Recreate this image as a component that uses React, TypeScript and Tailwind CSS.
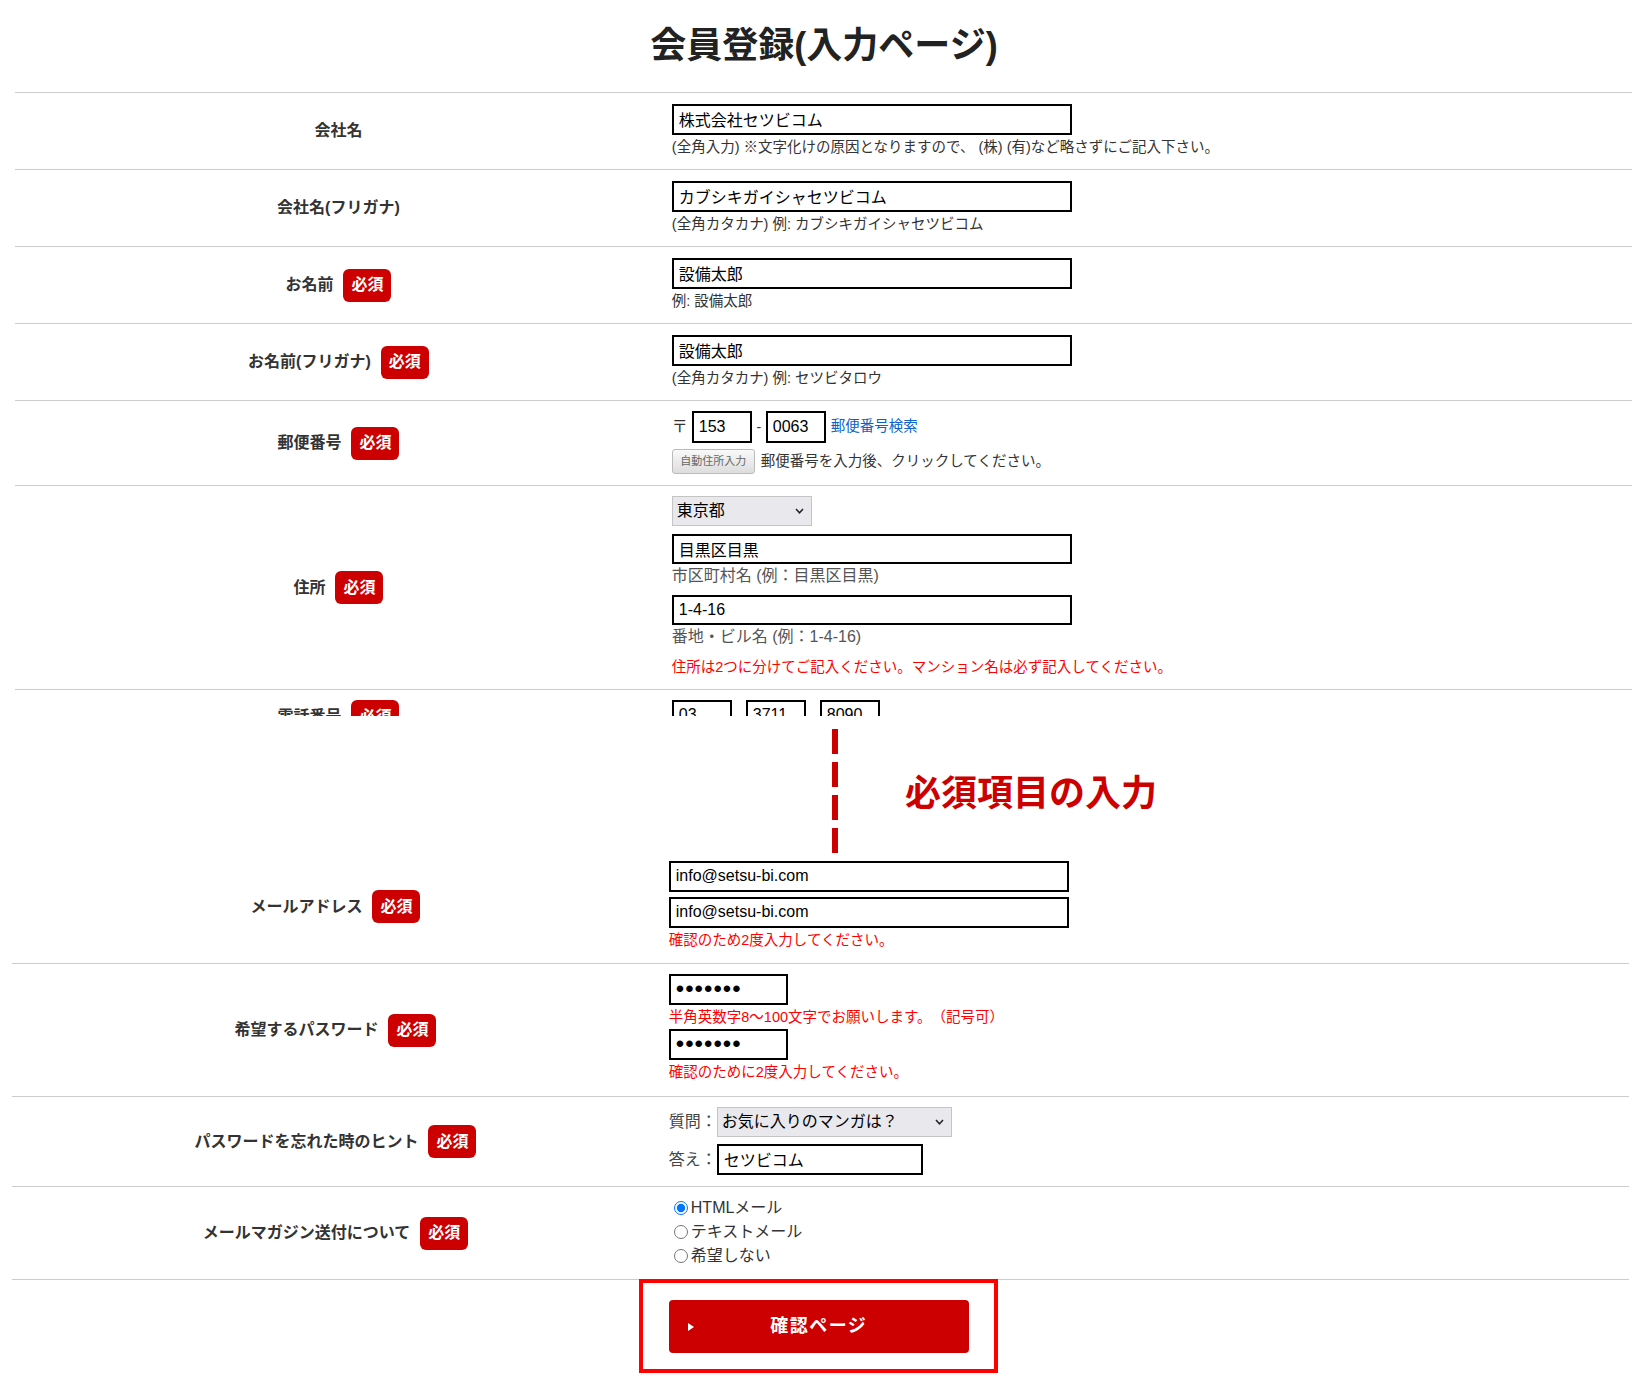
import type { ReactNode } from "react";

const basicRows = [
  {
    label: "会社名",
    required: false,
    value: "株式会社セツビコム",
    note: "(全角入力) ※文字化けの原因となりますので、 (株) (有)など略さずにご記入下さい。",
  },
  {
    label: "会社名(フリガナ)",
    required: false,
    value: "カブシキガイシャセツビコム",
    note: "(全角カタカナ) 例: カブシキガイシャセツビコム",
  },
  { label: "お名前", required: true, value: "設備太郎", note: "例: 設備太郎" },
  {
    label: "お名前(フリガナ)",
    required: true,
    value: "設備太郎",
    note: "(全角カタカナ) 例: セツビタロウ",
  },
];

const magazineOptions = ["HTMLメール", "テキストメール", "希望しない"];

const Required = () => (
  <span className="inline-flex h-[33px] w-[48px] items-center justify-center rounded-[6px] bg-[#cc0000] text-[16px] font-bold leading-none text-white">
    必須
  </span>
);

type RowProps = {
  label?: string;
  required?: boolean;
  noBorder?: boolean;
  bodyClassName?: string;
  children?: ReactNode;
};

const Row = ({ label, required, noBorder, bodyClassName, children }: RowProps) => (
  <div className={noBorder ? "flex" : "flex border-t border-[#cccccc]"}>
    <div className="flex w-[40%] items-center justify-center gap-[10px]">
      {label && <span className="text-[16px] font-bold text-[#333333]">{label}</span>}
      {required && <Required />}
    </div>
    <div className={`w-[60%] pl-[10px] ${bodyClassName ?? ""}`}>{children}</div>
  </div>
);

const TextBox = ({
  value,
  type = "text",
  className = "",
}: {
  value: string;
  type?: string;
  className?: string;
}) => (
  <input
    type={type}
    defaultValue={value}
    readOnly
    className={`block border-2 border-black bg-white px-[5px] pb-[1px] text-black outline-none ${className}`}
  />
);

// looks like the browser's grey select box
const FakeSelect = ({ value, className = "" }: { value: string; className?: string }) => (
  <div
    className={`flex items-center justify-between border border-[#c4c4c4] bg-[#e9e9ed] pl-[4px] pr-[7px] text-[16px] text-black ${className}`}
  >
    <span>{value}</span>
    <svg width="9" height="6" viewBox="0 0 9 6" fill="none">
      <polyline points="1,1 4.5,4.8 8,1" stroke="#222" strokeWidth="1.5" />
    </svg>
  </div>
);

const App = () => {
  return (
    <div className="min-h-[1400px] bg-white font-['Liberation_Sans','Noto_Sans_CJK_JP',sans-serif] text-[#333333] [text-spacing-trim:space-all]">
      <h1 className="flex h-[92px] items-center justify-center text-[36px] font-bold leading-[44px] text-[#222222]">
        会員登録(入力ページ)
      </h1>

      {/* upper part of the form */}
      <div className="ml-[15px] w-[1617px]">
        {basicRows.map((row) => (
          <Row key={row.label} label={row.label} required={row.required} bodyClassName="pt-[11px] pb-[10px]">
            <TextBox value={row.value} className="h-[31px] w-[400px] text-[16px]" />
            <p className="text-[14.5px] leading-[24px] text-[#333333]">{row.note}</p>
          </Row>
        ))}

        <Row label="郵便番号" required bodyClassName="pt-[10px] pb-[11px]">
          <div className="flex h-[32px] items-center">
            <span className="w-[20px] text-[16px] text-[#333333]">〒</span>
            <TextBox value="153" className="h-[32px] w-[60px] text-[16px]" />
            <span className="w-[14px] text-center text-[14px]">-</span>
            <TextBox value="0063" className="h-[32px] w-[60px] text-[16px]" />
            <a className="ml-[5px] cursor-pointer text-[14.5px] text-[#0a63c9]">郵便番号検索</a>
          </div>
          <div className="mt-[6px] flex items-center">
            <button className="h-[25px] w-[83px] rounded-[3px] border border-[#bbbbbb] bg-linear-to-b from-[#f9f9f9] to-[#dddddd] text-[11px] text-[#666666]">
              自動住所入力
            </button>
            <span className="ml-[6px] text-[14.5px] text-[#333333]">郵便番号を入力後、クリックしてください。</span>
          </div>
        </Row>

        <Row label="住所" required bodyClassName="pt-[10px] pb-[12px]">
          <FakeSelect value="東京都" className="h-[30px] w-[140px]" />
          <TextBox value="目黒区目黒" className="mt-[8px] h-[30px] w-[400px] text-[16px]" />
          <p className="text-[16px] leading-[24px] text-[#555555]">市区町村名 (例：目黒区目黒)</p>
          <TextBox value="1-4-16" className="mt-[7px] h-[30px] w-[400px] text-[16px]" />
          <p className="text-[16px] leading-[24px] text-[#555555]">番地・ビル名 (例：1-4-16)</p>
          <p className="mt-[8px] text-[14.5px] leading-[20px] text-[#ff0000]">
            住所は2つに分けてご記入ください。マンション名は必ず記入してください。
          </p>
        </Row>

        {/* phone row is cut off in the capture */}
        <div className="h-[27px] overflow-hidden">
          <Row label="電話番号" required bodyClassName="pt-[10px] pb-[12px]">
            <div className="flex items-center gap-[14px]">
              <TextBox value="03" className="h-[31px] w-[60px] text-[16px]" />
              <TextBox value="3711" className="h-[31px] w-[60px] text-[16px]" />
              <TextBox value="8090" className="h-[31px] w-[60px] text-[16px]" />
            </div>
          </Row>
        </div>
      </div>

      {/* annotation between the two captures */}
      <div className="flex h-[134px] pl-[832px]">
        <div className="flex h-[137px] flex-col gap-[8px] pt-[13px]">
          {[0, 1, 2, 3].map((i) => (
            <div key={i} className="h-[25px] w-[6px] shrink-0 bg-[#cc0000]" />
          ))}
        </div>
        <p className="ml-[67px] mt-[56px] text-[36px] font-bold leading-[44px] text-[#cc0000]">必須項目の入力</p>
      </div>

      {/* lower part of the form */}
      <div className="ml-[12px] w-[1617px]">
        <Row label="メールアドレス" required noBorder bodyClassName="pt-[11px] pb-[11px]">
          <TextBox value="info@setsu-bi.com" className="h-[31px] w-[400px] text-[16px]" />
          <TextBox value="info@setsu-bi.com" className="mt-[5px] h-[31px] w-[400px] text-[16px]" />
          <p className="text-[14.5px] leading-[24px] text-[#ff0000]">確認のため2度入力してください。</p>
        </Row>

        <Row label="希望するパスワード" required bodyClassName="pt-[10px] pb-[12px]">
          <TextBox type="password" value="1234567" className="h-[31px] w-[119px] text-[24px] tracking-[1px]" />
          <p className="text-[14.5px] leading-[24px] text-[#ff0000]">半角英数字8〜100文字でお願いします。（記号可）</p>
          <TextBox type="password" value="1234567" className="h-[31px] w-[119px] text-[24px] tracking-[1px]" />
          <p className="text-[14.5px] leading-[24px] text-[#ff0000]">確認のために2度入力してください。</p>
        </Row>

        <Row label="パスワードを忘れた時のヒント" required bodyClassName="pt-[10px] pb-[11px]">
          <div className="flex items-center">
            <span className="w-[48px] text-[16px] text-[#444444]">質問：</span>
            <FakeSelect value="お気に入りのマンガは？" className="h-[30px] w-[235px]" />
          </div>
          <div className="mt-[7px] flex items-center">
            <span className="w-[48px] text-[16px] text-[#444444]">答え：</span>
            <TextBox value="セツビコム" className="h-[31px] w-[206px] text-[16px]" />
          </div>
        </Row>

        <Row label="メールマガジン送付について" required bodyClassName="pt-[9px] pb-[11px]">
          {magazineOptions.map((opt, i) => (
            <label key={opt} className="flex h-[24px] items-center text-[16px] text-[#333333]">
              <input
                type="radio"
                name="magazine"
                defaultChecked={i === 0}
                className="m-0 ml-[5px] mr-[3px] h-[14px] w-[14px]"
              />
              {opt}
            </label>
          ))}
        </Row>

        <Row bodyClassName="pt-[20px] pb-[47px]">
          <div className="relative w-[300px]">
            <button className="flex h-[53px] w-[300px] items-center rounded-[4px] bg-[#cc0000] px-[19px] text-white">
              <svg width="6" height="8" viewBox="0 0 6 8">
                <polygon points="0,0 6,4 0,8" fill="#ffffff" />
              </svg>
              <span className="flex-1 text-center text-[18px] font-bold tracking-[1.5px]">確認ページ</span>
              <span className="w-[6px]" />
            </button>
            <div className="pointer-events-none absolute -top-[21px] -right-[29px] -bottom-[20px] -left-[30px] border-4 border-[#ff0000]" />
          </div>
        </Row>
      </div>
    </div>
  );
};

export default App;
